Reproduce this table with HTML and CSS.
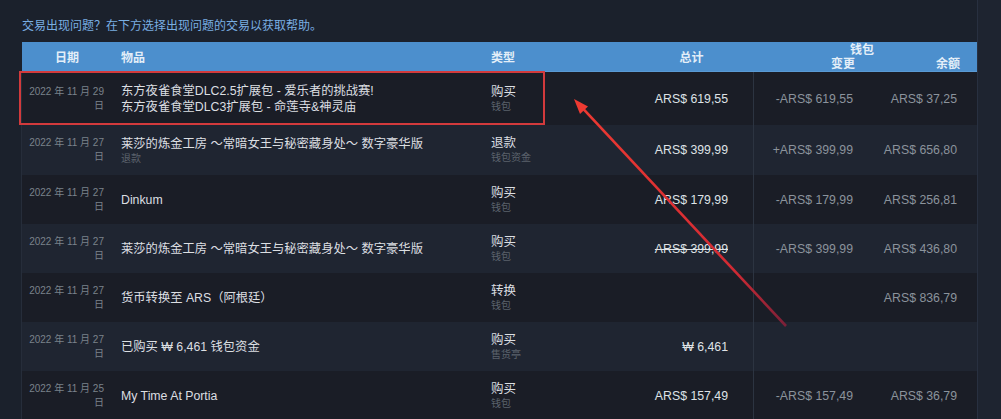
FILE: index.html
```html
<!DOCTYPE html>
<html lang="zh-CN">
<head>
<meta charset="utf-8">
<link rel="stylesheet" href="styles.css">
</head>
<body>
<div class="page">
  <div class="main">
    <p class="help">交易出现问题？在下方选择出现问题的交易以获取帮助。</p>
    <div class="table">
      <div class="head">
        <div class="h h-date">日期</div>
        <div class="h h-item">物品</div>
        <div class="h h-type">类型</div>
        <div class="h h-total">总计</div>
        <div class="h h-wallet">
          <span class="w-title">钱包</span>
          <span class="w-change">变更</span>
          <span class="w-bal">余额</span>
        </div>
      </div>

      <div class="row dark">
        <div class="c date">2022 年 11 月 29<br>日</div>
        <div class="c item">东方夜雀食堂DLC2.5扩展包 - 爱乐者的挑战赛!<br>东方夜雀食堂DLC3扩展包 - 命莲寺&amp;神灵庙</div>
        <div class="c type">购买<span class="sub">钱包</span></div>
        <div class="c total">ARS$ 619,55</div>
        <div class="c change">-ARS$ 619,55</div>
        <div class="c bal">ARS$ 37,25</div>
      </div>

      <div class="row light">
        <div class="c date">2022 年 11 月 27<br>日</div>
        <div class="c item">莱莎的炼金工房 ～常暗女王与秘密藏身处～ 数字豪华版<span class="sub">退款</span></div>
        <div class="c type">退款<span class="sub">钱包资金</span></div>
        <div class="c total">ARS$ 399,99</div>
        <div class="c change">+ARS$ 399,99</div>
        <div class="c bal">ARS$ 656,80</div>
      </div>

      <div class="row dark">
        <div class="c date">2022 年 11 月 27<br>日</div>
        <div class="c item">Dinkum</div>
        <div class="c type">购买<span class="sub">钱包</span></div>
        <div class="c total">ARS$ 179,99</div>
        <div class="c change">-ARS$ 179,99</div>
        <div class="c bal">ARS$ 256,81</div>
      </div>

      <div class="row light">
        <div class="c date">2022 年 11 月 27<br>日</div>
        <div class="c item">莱莎的炼金工房 ～常暗女王与秘密藏身处～ 数字豪华版</div>
        <div class="c type">购买<span class="sub">钱包</span></div>
        <div class="c total"><s>ARS$ 399,99</s></div>
        <div class="c change">-ARS$ 399,99</div>
        <div class="c bal">ARS$ 436,80</div>
      </div>

      <div class="row dark">
        <div class="c date">2022 年 11 月 27<br>日</div>
        <div class="c item">货币转换至 ARS（阿根廷）</div>
        <div class="c type">转换<span class="sub">钱包</span></div>
        <div class="c total"></div>
        <div class="c change"></div>
        <div class="c bal">ARS$ 836,79</div>
      </div>

      <div class="row light">
        <div class="c date">2022 年 11 月 27<br>日</div>
        <div class="c item">已购买 ₩ 6,461 钱包资金</div>
        <div class="c type">购买<span class="sub">售货亭</span></div>
        <div class="c total">₩ 6,461</div>
        <div class="c change"></div>
        <div class="c bal"></div>
      </div>

      <div class="row dark">
        <div class="c date">2022 年 11 月 25<br>日</div>
        <div class="c item">My Time At Portia</div>
        <div class="c type">购买<span class="sub">钱包</span></div>
        <div class="c total">ARS$ 157,49</div>
        <div class="c change">-ARS$ 157,49</div>
        <div class="c bal">ARS$ 36,79</div>
      </div>
    </div>
  </div>
  <div class="side"></div>
</div>

<div class="mark-box"></div>
<svg class="mark-arrow" width="1001" height="419" viewBox="0 0 1001 419">
  <defs>
    <linearGradient id="ag" x1="786" y1="326" x2="576" y2="100" gradientUnits="userSpaceOnUse">
      <stop offset="0" stop-color="#7a2038"/>
      <stop offset="0.25" stop-color="#d22a33"/>
      <stop offset="1" stop-color="#ee3a32"/>
    </linearGradient>
  </defs>
  <line x1="786" y1="326" x2="583.5" y2="109.2" stroke="url(#ag)" stroke-width="2.6"/>
  <polygon points="574,99 588,106.5 580,114" fill="#ee3a32"/>
</svg>
</body>
</html>
```

FILE: styles.css
```css
html, body {
  margin: 0;
  padding: 0;
}
body {
  width: 1001px;
  height: 419px;
  overflow: hidden;
  background: #1b212c;
  font-family: "Liberation Sans", "Noto Sans CJK SC", sans-serif;
  position: relative;
}
.page {
  display: flex;
  height: 419px;
}
.main {
  padding: 18px 0 0 22px;
  width: 955px;
}
.side {
  flex: 1;
  background: #1e2430;
  border-left: 1px solid #283040;
}
.help {
  margin: 0 0 8px;
  font-size: 12px;
  line-height: 16px;
  color: #7aaee2;
}
.table {
  width: 955px;
}
.head, .row {
  display: grid;
  grid-template-columns: 90px 371px 147px 123px 112px 112px;
}
.head {
  height: 30px;
  background: #4c8fcd;
  color: #e3eef8;
  font-weight: bold;
  font-size: 12px;
  border-bottom: 1px solid #5a9ad4;
  box-sizing: border-box;
}
.h {
  display: flex;
  align-items: center;
}
.h-date { justify-content: center; }
.h-item { padding-left: 9px; }
.h-type { padding-left: 8px; }
.h-total { justify-content: center; }
.h-wallet {
  grid-column: span 2;
  display: grid;
  grid-template-columns: 1fr 1fr;
  align-items: center;
  line-height: 14px;
  padding-top: 1px;
}
.w-title {
  grid-column: span 2;
  text-align: center;
  padding-right: 6px;
}
.w-change { text-align: right; padding-right: 10px; }
.w-bal { text-align: right; padding-right: 17px; }

.row {
  border-left: 1px solid #262d3a;
  margin-left: -1px;
}
.row.dark { background: #1a1d26; }
.row.light { background: #1f2531; }
.c {
  padding: 10.5px 0;
  display: flex;
  flex-direction: column;
  justify-content: center;
}
.date {
  font-size: 10px;
  line-height: 14px;
  color: #7b828b;
  text-align: right;
  padding-right: 8px;
  display: block;
  align-self: center;
}
.item {
  font-size: 12.3px;
  line-height: 16px;
  color: #dcdfe2;
  padding-left: 9px;
  display: block;
  align-self: center;
}
.type {
  font-size: 12.5px;
  line-height: 15px;
  color: #dcdfe2;
  padding-left: 8px;
}
.sub {
  display: block;
  font-size: 10px;
  line-height: 13px;
  color: #5b626c;
}
.total {
  font-size: 12.3px;
  color: #dfe3e6;
  text-align: right;
  padding-right: 25px;
}
.total s {
  text-decoration-thickness: 1px;
}
.change {
  font-size: 12.3px;
  color: #8b939c;
  text-align: right;
  padding-right: 12px;
  border-left: 1px solid #2c3441;
}
.bal {
  font-size: 12.3px;
  color: #8b939c;
  text-align: right;
  padding-right: 20px;
}

.mark-box {
  position: absolute;
  left: 19px;
  top: 71px;
  width: 526px;
  height: 54px;
  box-sizing: border-box;
  border: 2px solid #d23a3c;
  pointer-events: none;
}
.mark-arrow {
  position: absolute;
  left: 0;
  top: 0;
  pointer-events: none;
}
```
